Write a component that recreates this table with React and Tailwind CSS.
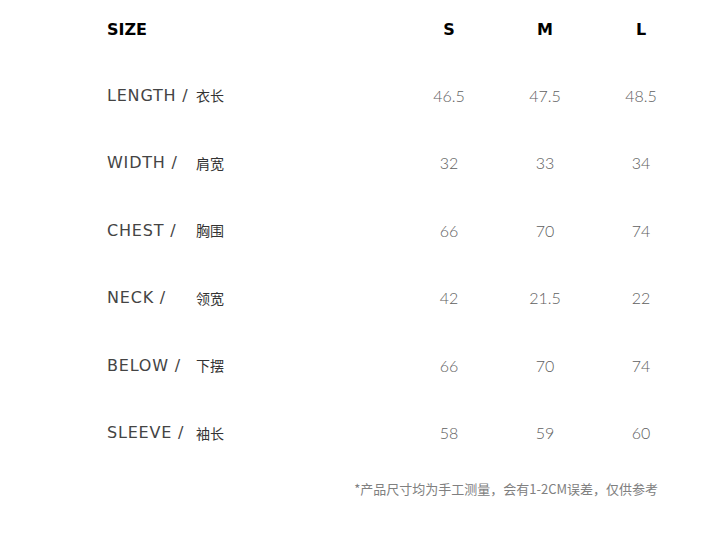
import React from "react";

const rows = [
  { en: "LENGTH /", zh: "衣长", s: "46.5", m: "47.5", l: "48.5" },
  { en: "WIDTH /", zh: "肩宽", s: "32", m: "33", l: "34" },
  { en: "CHEST /", zh: "胸围", s: "66", m: "70", l: "74" },
  { en: "NECK /", zh: "领宽", s: "42", m: "21.5", l: "22" },
  { en: "BELOW /", zh: "下摆", s: "66", m: "70", l: "74" },
  { en: "SLEEVE /", zh: "袖长", s: "58", m: "59", l: "60" },
];

const labelFont = { fontFamily: '"DejaVu Sans", sans-serif' };
const numFont = { fontFamily: "Lato, sans-serif" };

export default function App() {
  return (
    <div className="w-[728px] h-[541px] bg-white pl-[107px] pt-[18px]">
      {/* header */}
      <div className="flex h-6 items-center font-bold text-[16px] text-black" style={labelFont}>
        <div className="w-[294px]">SIZE</div>
        <div className="w-24 text-center">S</div>
        <div className="w-24 text-center">M</div>
        <div className="w-24 text-center">L</div>
      </div>

      <div className="mt-5">
        {rows.map((row, i) => (
          <div key={i} className="flex h-[67.5px] items-center">
            <div className="w-[294px] flex items-center">
              <span
                className="w-[89px] whitespace-nowrap text-[16px] tracking-[0.8px] text-[#444]"
                style={labelFont}
              >
                {row.en}
              </span>
              <span
                className="text-[14px] text-[#333]"
                style={{ fontFamily: '"Noto Sans CJK SC", sans-serif' }}
              >
                {row.zh}
              </span>
            </div>
            <div className="w-24 text-center text-[16px] font-light text-[#5e5e5e]" style={numFont}>
              {row.s}
            </div>
            <div className="w-24 text-center text-[16px] font-light text-[#5e5e5e]" style={numFont}>
              {row.m}
            </div>
            <div className="w-24 text-center text-[16px] font-light text-[#5e5e5e]" style={numFont}>
              {row.l}
            </div>
          </div>
        ))}
      </div>

      <div
        className="mt-3 w-[551px] text-right text-[13px] text-[#808080]"
        style={{ fontFamily: '"Noto Sans CJK SC", sans-serif' }}
      >
        *产品尺寸均为手工测量，会有1-2CM误差，仅供参考
      </div>
    </div>
  );
}
